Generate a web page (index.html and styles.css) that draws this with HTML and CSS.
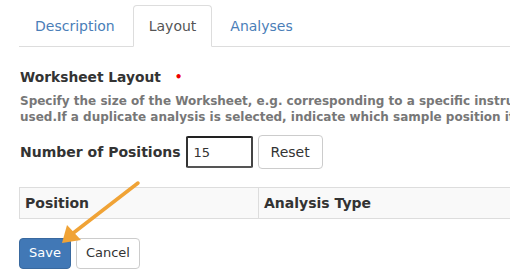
FILE: index.html
```html
<!DOCTYPE html>
<html lang="en">
<head>
  <meta charset="UTF-8">
  <title>Worksheet Template</title>
  <link rel="stylesheet" href="styles.css">
</head>
<body>
  <ul class="tabs">
    <li><a href="#">Description</a></li>
    <li class="active"><a href="#">Layout</a></li>
    <li><a href="#">Analyses</a></li>
  </ul>

  <div class="field">
    <h3>Worksheet Layout <span class="required">&bull;</span></h3>
    <p class="help">Specify the size of the Worksheet, e.g. corresponding to a specific instrument's tray size. Then select an Analysis 'type' per Worksheet position. Where QC samples are<br>used.If a duplicate analysis is selected, indicate which sample position it should be a duplicate of</p>
    <div class="positions">
      <label>Number of Positions</label>
      <input type="text" value="15">
      <button class="btn">Reset</button>
    </div>
  </div>

  <table class="layout">
    <tr>
      <th class="col-pos">Position</th>
      <th>Analysis Type</th>
    </tr>
  </table>

  <div class="actions">
    <button class="btn btn-primary">Save</button>
    <button class="btn">Cancel</button>
  </div>

  <svg class="pointer" width="510" height="278" viewBox="0 0 510 278">
    <line x1="138" y1="183" x2="72" y2="234" stroke="#f0a336" stroke-width="3.5" stroke-linecap="round"/>
    <polygon points="62,243 67,225 81,240" fill="#f0a336"/>
  </svg>
</body>
</html>
```

FILE: styles.css
```css
body {
  font-family: "DejaVu Sans", sans-serif;
  font-size: 14px;
  color: #333;
  margin: 0;
  padding: 5px 0 0 19px;
  overflow: hidden;
  position: relative;
}

.tabs {
  list-style: none;
  margin: 0;
  padding: 0;
  display: flex;
  border-bottom: 1px solid #ddd;
}

.tabs li {
  margin: 0 2px -1px 0;
}

.tabs a {
  display: block;
  padding: 10px 15px;
  line-height: 20px;
  color: #4a7eb8;
  text-decoration: none;
  border: 1px solid transparent;
  border-radius: 4px 4px 0 0;
}

.tabs .active a {
  color: #555;
  background: #fff;
  border-color: #ddd #ddd transparent;
}

.field h3 {
  font-size: 13.8px;
  margin: 20px 0 6px 1px;
  line-height: 20px;
}

.required {
  color: #e00;
  font-size: 12px;
  margin-left: 9px;
  vertical-align: 1px;
}

.help {
  font-size: 12px;
  font-weight: bold;
  color: #777;
  line-height: 16px;
  white-space: nowrap;
  margin: 0 0 10px 1px;
}

.positions {
  display: flex;
  align-items: center;
  gap: 5px;
}

.positions label {
  font-weight: bold;
  margin-left: 1px;
}

.positions input {
  width: 51px;
  height: 28px;
  box-sizing: content-box;
  padding: 0 6px;
  border: 2px solid #3a3a3a;
  border-color: #222 #444 #555 #333;
  border-radius: 2px;
  font-family: inherit;
  font-size: 13px;
  color: #333;
}

.btn {
  font-family: inherit;
  font-size: 14px;
  color: #333;
  background: #fff;
  border: 1px solid #ccc;
  border-radius: 4px;
  padding: 6px 12px;
  line-height: 20px;
}

.layout {
  border-collapse: collapse;
  width: 520px;
  margin-top: 18px;
}

.layout th {
  text-align: left;
  background: #f9f9f9;
  border: 1px solid #ddd;
  padding: 5px 5px;
  line-height: 20px;
  font-size: 14px;
}

.layout .col-pos {
  width: 228px;
}

.actions {
  display: flex;
  gap: 5px;
  margin-top: 19px;
}

.actions .btn {
  font-size: 13px;
  padding: 4px 9px 5px;
}

.actions .btn-primary {
  background: #4178b6;
  border-color: #39699f;
  color: #fff;
}

.pointer {
  position: absolute;
  left: 0;
  top: 0;
}
```
